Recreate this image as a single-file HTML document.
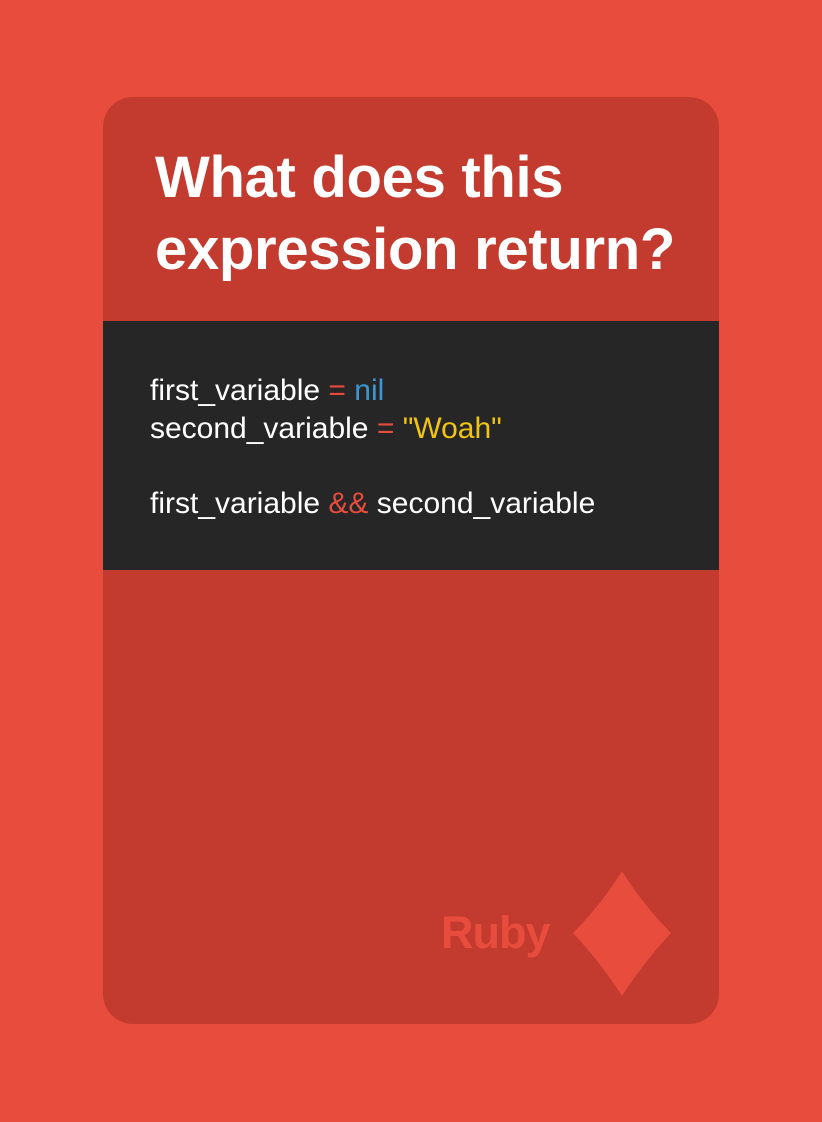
<!DOCTYPE html>
<html><head><style>
body{margin:0;width:822px;height:1122px;background:#E84C3D;position:relative;overflow:hidden;font-family:"Liberation Sans",Arial,sans-serif}
.card{position:absolute;left:103px;top:97px;width:616px;height:927px;background:#C33A2F;border-radius:30px;overflow:hidden}
h1{position:absolute;left:52px;top:45px;margin:0;color:#fff;font-size:58px;font-weight:bold;line-height:72px;letter-spacing:-0.3px}
.code{position:absolute;left:0;top:224px;width:616px;height:249px;background:#262626}
.l{position:absolute;left:47px;color:#fff;font-size:30px;line-height:30px;white-space:pre}
.r{color:#E84C3D}.b{color:#3B97D3}.y{color:#F1C40F}
.ruby{position:absolute;left:338px;top:810px;color:#E84C3D;font-size:45px;font-weight:bold;letter-spacing:-1px}
</style></head><body>
<div class="card">
<h1>What does this<br>expression return?</h1>
<div class="code">
<div class="l" style="top:55px">first_variable <span class="r">=</span> <span class="b">nil</span></div>
<div class="l" style="top:93px">second_variable <span class="r">=</span> <span class="y">"Woah"</span></div>
<div class="l" style="top:168px">first_variable <span class="r">&amp;&amp;</span> second_variable</div>
</div>
<div class="ruby">Ruby</div>
<svg style="position:absolute;left:0;top:0" width="616" height="927"><path d="M519 774 Q540 808 568 836 Q540 866 519 899 Q498 866 470 836 Q498 808 519 774Z" fill="#E84C3D"/></svg>
</div>
</body></html>
